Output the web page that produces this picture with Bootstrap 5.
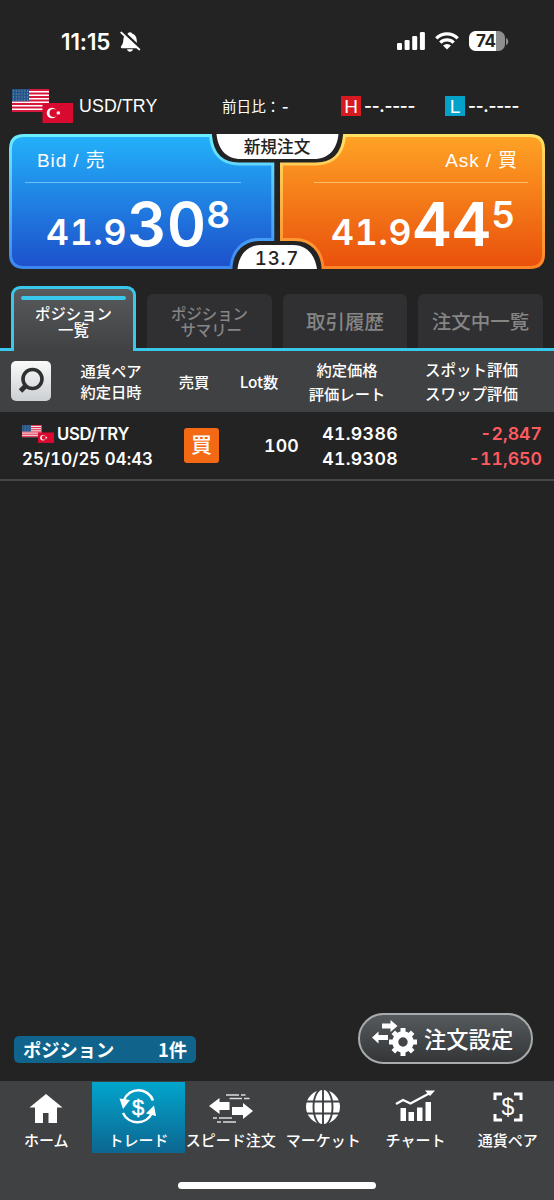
<!DOCTYPE html>
<html lang="ja">
<head>
<meta charset="utf-8">
<meta name="viewport" content="width=device-width, initial-scale=1">
<title>トレード</title>
<link href="https://cdn.jsdelivr.net/npm/bootstrap@5.3.0/dist/css/bootstrap.min.css" rel="stylesheet">
<style>
html,body{height:1200px;overflow:hidden}
body{background:#232323;color:#fff;font-family:"Noto Sans CJK JP",sans-serif;font-size:15.3px;line-height:20px}
svg{display:block;flex:none}
.app{width:554px;height:1200px}
.num{font-family:Inter,"Noto Sans CJK JP",sans-serif;font-feature-settings:"tnum";font-weight:600}
.lat{font-family:"Liberation Sans","Noto Sans CJK JP",sans-serif}
.t{white-space:nowrap}
.status{height:85px;padding:29px 48px 0 61px}
.clock{font-family:Inter,sans-serif;font-weight:600;font-size:22.5px;line-height:26px;letter-spacing:-.1px;width:57px}
.batt{width:36px;height:20px;border-radius:6.5px;background:linear-gradient(90deg,#fff 76%,#8e8e8e 76%);color:#232323;font:700 17px/20px Inter,sans-serif;letter-spacing:-.5px;padding-left:7px}
.quote{height:49px;padding-left:12px}
.quote .pair{font-size:17.8px;width:143px;margin-left:6px;line-height:43px;letter-spacing:.1px}
.hl{width:20px;height:20px;margin-top:11px;font-size:19px;line-height:21px;text-align:center}
.dash{font:600 17px/42px Inter,sans-serif;letter-spacing:-.25px;padding-left:3px}
.panel-wrap{height:152px}
.panel-wrap>svg{position:absolute;left:0;top:0}
.side{position:relative;width:277px;height:135px}
.side .cap{font-size:19px;line-height:28px;padding-top:13px;height:59px;letter-spacing:.9px}
.price{line-height:60px;height:64px;align-items:baseline}
.p1{font-size:35.5px;letter-spacing:.7px}
.p2{font-size:61px;position:relative;top:1px}
.p3{font-size:37px;position:relative;top:-17px}
.tip{position:absolute;color:#232323;width:130px;text-align:center;left:212px}
.tabs{height:65px;border-bottom:3px solid #39c7ec;padding-left:11px;position:relative}
.tab1{width:125px;height:65px;border:3px solid #39c7ec;border-bottom:0;border-radius:9px 9px 0 0;background:linear-gradient(#595a5c,#3f4143);padding-top:7px;font-size:15.4px;line-height:16px;text-align:center;font-weight:500;flex:none}
.tab1 i{display:block;height:4px;border-radius:2px;background:#39c7ec;width:105px;margin:0 auto 5px}
.tab0{height:54px;margin-top:8px;border-radius:6px 6px 0 0;background:#303032;color:#858585;font-size:19.5px;flex:none;font-weight:500}
.tab0 small{font-size:15.4px;line-height:16px;text-align:center}
.thead{height:61px;background:#3f4143;padding:0 0 1px 11px}
.thead .c{text-align:center;font-weight:500;flex:none}
.find{width:40px;height:40px;border-radius:5px;background:linear-gradient(#fafafa,#cbd0d2);flex:none}
.trow{height:69px;border-bottom:2px solid #464646;font-size:17.7px;line-height:25px}
.buy{width:35px;height:35px;border-radius:3px;background:#f46a14;font-size:21px;line-height:34px;text-align:center;font-weight:500}
.neg{color:#ff5a60}
.count{width:182px;height:27px;border-radius:5px;background:#10648c;font-size:18.3px;line-height:26px;font-weight:700;margin:0 0 18px 14px;padding:0 9px}
.pill{width:175px;height:51px;border:2.5px solid #a8abab;border-radius:26px;background:linear-gradient(#565a5c,#343638);font-size:22.3px;margin:0 21px 17px 0;padding:0 0 2px 11px;font-weight:500}
.foot{height:119px;background:#3f4143}
.foot a{height:71px;margin-top:1px;color:#fff;text-decoration:none;flex:1 1 0;width:0;font-size:15px;line-height:23px;font-weight:500}
.foot a.on{background:linear-gradient(#02a5cd,#0c6690)}
.home{width:198px;height:7px;border-radius:4px;background:#fff;margin:29px auto 0 178px}
</style>
</head>
<body>
<svg width="0" height="0" class="position-absolute"><defs>
<symbol id="flags" viewBox="0 0 61 34">
<rect width="37" height="23" fill="#fff"/>
<path d="M0 1H37M0 4.5H37M0 8H37M0 11.5H37M0 15H37M0 18.5H37M0 22H37" stroke="#d8193d" stroke-width="1.8"/>
<rect width="17" height="12.3" fill="#275486"/>
<path d="M1 2H17M1 5H17M1 8H17M1 11H17" stroke="#7fa8c8" stroke-width="1" stroke-dasharray="1 1.8"/>
<rect x="30.5" y="14" width="30.5" height="20" fill="#d80a30"/>
<circle cx="40" cy="24" r="5.300" fill="#fff"/><circle cx="41.600" cy="24" r="4.100" fill="#d80a30"/>
<path d="M44.500 24l1.200-.5.1-1.300.8 1 1.300-.4-.8 1.200.8 1.100-1.300-.4-.8 1-.1-1.300z" fill="#fff" stroke="#fff" stroke-width=".6"/>
</symbol></defs></svg>
<div class="app d-flex flex-column">
  <header class="status d-flex align-items-start">
    <div class="clock t">11:15</div>
    <svg width="22" height="22" viewBox="0 0 22 22" style="margin-left:2px;margin-top:2px"><path d="M10 1.200c1.400 0 2.100.8 2.300 1.600 2.700.8 4.300 3 4.400 6 .1 4 1 5 2.200 6.500.7 1 .2 1.900-1 1.900H2.100c-1.200 0-1.700-1-1-1.900C2.300 13.700 3.200 12.700 3.300 8.800c.1-3 1.700-5.200 4.400-6C7.900 2 8.600 1.200 10 1.200zM7 18.300h6c-.3 1.500-1.500 2.400-3 2.400s-2.700-.9-3-2.400z" fill="#fff"/><path d="M2.500.7L21 17.700" stroke="#232323" stroke-width="3.200"/><path d="M1.200 1.500L19.300 18.500" stroke="#fff" stroke-width="1.800" stroke-linecap="round"/></svg>
    <svg width="29" height="20" viewBox="0 0 29 20" class="ms-auto" style="margin-top:2px"><g fill="#fff"><rect x="0" y="12" width="5" height="7" rx="1.300"/><rect x="7.600" y="9" width="5" height="10" rx="1.300"/><rect x="15.200" y="5" width="5" height="14" rx="1.300"/><rect x="22.900" y="1" width="5" height="18" rx="1.300"/></g></svg>
    <svg width="24" height="18" viewBox="0 0 24 18" style="margin:3px 10px 0 9px"><g fill="none" stroke="#fff" stroke-width="3.300"><path d="M1.300 6.300a15.200 15.200 0 0 1 21.400 0"/><path d="M5.300 10.700a9.400 9.400 0 0 1 13.400 0"/></g><path d="M8 13.500a5.800 5.800 0 0 1 8 0L12 17.500z" fill="#fff"/></svg>
    <div class="batt t" style="margin-top:2px">74</div>
    <svg width="3" height="8" viewBox="0 0 3 8" style="margin:9px -3px 0 1px"><path d="M0 0c3 1 3 6 0 7z" fill="#8e8e8e"/></svg>
  </header>

  <section class="quote d-flex">
    <svg width="61" height="34" style="margin-top:4px"><use href="#flags"/></svg>
    <div class="pair lat t">USD/TRY</div>
    <div class="t" style="width:119px;font-size:14.600px;line-height:41px">前日比：<span class="num">-</span></div>
    <div class="hl lat" style="background:#d71920">H</div><div class="dash t" style="width:84px">--.----</div>
    <div class="hl lat" style="background:#04a1c9">L</div><div class="dash t">--.----</div>
  </section>

  <section class="panel-wrap d-flex position-relative">
    <svg width="554" height="137" viewBox="0 0 554 137">
      <defs>
        <linearGradient id="b" x2="0" y2="1"><stop stop-color="#23b1fa"/><stop offset="1" stop-color="#1d50cb"/></linearGradient>
        <linearGradient id="bs" x2="0" y2="1"><stop stop-color="#6bedff"/><stop offset="1" stop-color="#3c86f1"/></linearGradient>
        <linearGradient id="o" x2="0" y2="1"><stop stop-color="#ffa325"/><stop offset="1" stop-color="#e9500c"/></linearGradient>
        <linearGradient id="os" x2="0" y2="1"><stop stop-color="#ffe265"/><stop offset="1" stop-color="#ff8426"/></linearGradient>
      </defs>
      <path d="M24 1.500H210.500C212 19 221 30 239 30H272.800V105.500H259C243 105.500 232 117 231 133.500H24Q10.500 133.500 10.500 120V15Q10.500 1.500 24 1.500Z" fill="url(#b)" stroke="url(#bs)" stroke-width="3"/>
      <path d="M530 1.500H344.500C343 19 334 30 316 30H281.500V105.500H295C311 105.500 322 117 323 133.500H530Q543.500 133.500 543.500 120V15Q543.500 1.500 530 1.500Z" fill="url(#o)" stroke="url(#os)" stroke-width="3"/>
      <path d="M216.500 0H338.500C337 15 329 25 314 25H241C226 25 218 15 216.500 0ZM237.500 135C239 121 247 111 261 111H293C307 111 315 121 317 135Z" fill="#fff"/>
      <path d="M25 48.500H241" stroke="#69bff6" stroke-width="1"/><path d="M314 48.500H528" stroke="#ffbd68" stroke-width="1"/>
    </svg>
    <div class="side">
      <div class="cap lat t" style="padding-left:37px">Bid / 売</div>
      <div class="price num d-flex t" style="padding-left:46px"><span class="p1">41.9</span><span class="p2">30</span><span class="p3">8</span></div>
    </div>
    <div class="side">
      <div class="cap lat t text-end" style="padding-right:36px">Ask / 買</div>
      <div class="price num d-flex t" style="padding-left:54px"><span class="p1">41.9</span><span class="p2">44</span><span class="p3">5</span></div>
    </div>
    <div class="tip t" style="top:2px;font-size:16.700px;font-weight:500">新規注文</div>
    <div class="tip t" style="top:115px;font:500 18.700px/20px Inter,sans-serif;letter-spacing:.8px;font-feature-settings:'tnum'">13.7</div>
  </section>

  <nav class="tabs d-flex">
    <div class="tab1 t"><i></i>ポジション<br>一覧</div>
    <div class="tab0 d-flex align-items-center justify-content-center t" style="width:125px;margin-left:11px"><small>ポジション<br>&nbsp;サマリー</small></div>
    <div class="tab0 d-flex align-items-center justify-content-center t" style="width:124px;margin-left:11px">取引履歴</div>
    <div class="tab0 d-flex align-items-center justify-content-center t" style="width:125px;margin-left:11px">注文中一覧</div>
  </nav>

  <section class="thead d-flex align-items-center">
    <div class="find"><svg width="40" height="40" viewBox="0 0 40 40"><circle cx="21.500" cy="18" r="9.500" fill="none" stroke="#303030" stroke-width="3.600"/><path d="M15.300 24.300L9.500 30" stroke="#303030" stroke-width="5"/></svg></div>
    <div class="c t" style="width:120px;line-height:21.500px">通貨ペア<br>約定日時</div>
    <div class="c t" style="width:46px">売買</div>
    <div class="c t" style="width:84px">Lot数</div>
    <div class="c t" style="width:92px;line-height:24px">約定価格<br>評価レート</div>
    <div class="c t" style="width:157px;line-height:24px;font-size:15.500px">スポット評価<br>スワップ評価</div>
  </section>

  <section class="trow num d-flex">
    <div style="width:162px;padding:10px 0 0 22px;flex:none">
      <div class="d-flex t" style="font-size:16.700px;letter-spacing:-.300px"><svg width="32" height="18" style="margin:3px 3px 0 0"><use href="#flags"/></svg>USD/TRY</div>
      <div class="t" style="font-size:16.800px;line-height:24px;letter-spacing:.05px">25/10/25 04:43</div>
    </div>
    <div style="width:57px;padding:16px 0 0 22px"><div class="buy">買</div></div>
    <div class="t text-end" style="width:80px;line-height:68px;letter-spacing:.2px">100</div>
    <div class="t text-end" style="width:99px;padding-top:9px;letter-spacing:.35px">41.9386<br>41.9308</div>
    <div class="t text-end neg" style="width:144px;padding-top:9px">-2,847<br>-11,650</div>
  </section>

  <main class="flex-grow-1 d-flex align-items-end justify-content-between">
    <div class="count d-flex justify-content-between t"><span>ポジション</span><span>1件</span></div>
    <div class="pill d-flex align-items-center t">
      <svg width="48" height="38" viewBox="0 0 48 38" style="margin-right:5px"><g fill="#fff"><path d="M11 4.500H19.500V1L26.500 7L19.500 13V9.500H11ZM1 18.500L7.500 12.500V16H17V21H7.500V24.500Z"/></g>
        <circle cx="32" cy="23" r="7.700" fill="none" stroke="#fff" stroke-width="6"/>
        <g stroke="#fff" stroke-width="5"><path d="M32 13.500V9M32 32.500V37M22.500 23H18M41.500 23H46M25.500 16.500L22.300 13.300M38.500 16.500L41.700 13.300M25.500 29.500L22.300 32.700M38.500 29.500L41.700 32.700"/></g></svg>注文設定
    </div>
  </main>

  <footer class="foot">
    <div class="d-flex">
      <a href="#" class="d-flex flex-column align-items-center t"><svg width="42" height="46" viewBox="0 0 42 46"><path d="M21 12L4.500 25.500H10V41H18V31H23.500V41H32V25.500H37.500Z" fill="#fff"/></svg>ホーム</a>
      <a href="#" class="on d-flex flex-column align-items-center t"><svg width="42" height="46" viewBox="0 0 42 46"><g fill="none" stroke="#fff" stroke-width="2.500"><path d="M7 18A15.500 15.500 0 0 1 36 18.500"/><path d="M6 31A16 16 0 0 0 35 31"/></g><path d="M2.500 16.500L13 18L6 27ZM39 34L29 31.500L37 23.500Z" fill="#fff"/><text x="21" y="32.500" text-anchor="middle" font-family="Liberation Sans" font-size="22" fill="#fff" stroke="#fff" stroke-width=".5">$</text></svg>トレード</a>
      <a href="#" class="d-flex flex-column align-items-center t"><svg width="46" height="46" viewBox="0 0 46 46"><path d="M1 24L11.500 16V20H21.500V28H11.500V32ZM45 29L35 21V25H24V33H35V37Z" fill="#fff"/><path d="M18 13H31M33 13H37.500M21.500 16.500H34M36 16.500H41.500M5 36H9M11 36H24M9 40H13M15 40H28" stroke="#ddd" stroke-width="1.500"/></svg>スピード注文</a>
      <a href="#" class="d-flex flex-column align-items-center t"><svg width="42" height="46" viewBox="0 0 42 46"><circle cx="21" cy="25" r="17" fill="#fff"/><g fill="none" stroke="#3f4143" stroke-width="1.900"><path d="M21 7V43M3 19.500H39M3 31.500H39"/><ellipse cx="21" cy="25" rx="9.500" ry="18.500"/></g></svg>マーケット</a>
      <a href="#" class="d-flex flex-column align-items-center t"><svg width="42" height="46" viewBox="0 0 42 46"><path d="M6.500 39V26H12V39ZM14.500 39V30H20V39ZM23 39V25.500H28.500V39ZM31.500 39V20H37V39Z" fill="#fff"/><path d="M2 22L9 18L16.500 21.500L36 11" fill="none" stroke="#fff" stroke-width="2.300"/><path d="M31 8.500H41L36 14Z" fill="#fff"/></svg>チャート</a>
      <a href="#" class="d-flex flex-column align-items-center t"><svg width="42" height="46" viewBox="0 0 42 46"><path d="M8 18V12H15M27 12H34V18M8 32V38H15M27 38H34V32" fill="none" stroke="#fff" stroke-width="3"/><text x="21" y="32.500" text-anchor="middle" font-family="Liberation Sans" font-size="23" fill="#fff">$</text></svg>通貨ペア</a>
    </div>
    <div class="home"></div>
  </footer>
</div>
<script src="https://cdn.jsdelivr.net/npm/bootstrap@5.3.0/dist/js/bootstrap.bundle.min.js"></script>
</body>
</html>
